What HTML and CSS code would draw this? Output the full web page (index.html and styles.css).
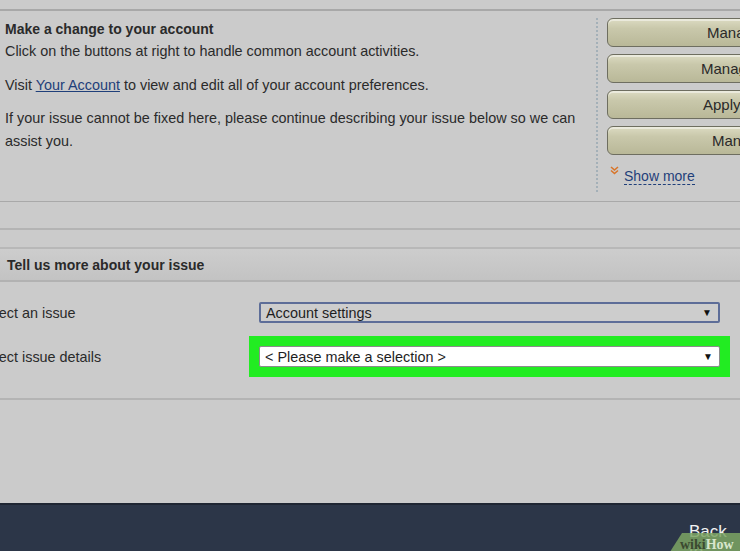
FILE: index.html
```html
<!DOCTYPE html>
<html>
<head>
<meta charset="utf-8">
<link rel="stylesheet" href="styles.css">
</head>
<body>
<div class="page">
  <div class="topline"></div>
  <section class="account">
    <div class="account-text">
      <h2 class="title">Make a change to your account</h2>
      <p class="p1">Click on the buttons at right to handle common account activities.</p>
      <p class="p2">Visit <a href="#" class="link">Your Account</a> to view and edit all of your account preferences.</p>
      <p class="p3">If your issue cannot be fixed here, please continue describing your issue below so we can assist you.</p>
    </div>
    <div class="actions">
      <div class="btn"><span>Manage</span></div>
      <div class="btn"><span>Manage</span></div>
      <div class="btn"><span>Apply</span></div>
      <div class="btn"><span>Man</span></div>
      <div class="more">
        <svg class="chev" width="9" height="9" viewBox="0 0 9 9"><path d="M1 1 L4.5 4 L8 1 M1 4.5 L4.5 7.5 L8 4.5" fill="none" stroke="#d8752a" stroke-width="1.6"/></svg>
        <a href="#" class="more-link">Show more</a>
      </div>
    </div>
  </section>
  <div class="gap1"></div>
  <div class="gap2"></div>
  <div class="panel-head">Tell us more about your issue</div>
  <div class="form">
    <div class="row row1">
      <div class="label">Select an issue</div>
      <div class="select sel-blue"><span>Account settings</span><span class="arrow">&#9660;</span></div>
    </div>
    <div class="row row2">
      <div class="label">Select issue details</div>
      <div class="highlight">
        <div class="select sel-white"><span>&lt; Please make a selection &gt;</span><span class="arrow">&#9660;</span></div>
      </div>
    </div>
  </div>
  <div class="filler"></div>
  <footer class="footer">
    <span class="back">Back to</span>
    <div class="wm"><span class="wm-wiki">wiki</span><span class="wm-how">How</span></div>
  </footer>
</div>
</body>
</html>
```

FILE: styles.css
```css
html, body {
  margin: 0;
  padding: 0;
  background: #cbcbcb;
}
body {
  font-family: "Liberation Sans", Arial, sans-serif;
  color: #2a2a2a;
  width: 740px;
  height: 551px;
  overflow: hidden;
}
.page {
  display: flex;
  flex-direction: column;
  height: 551px;
}
.topline {
  height: 9px;
  border-bottom: 2px solid #a8a8a8;
  flex: none;
}
.account {
  display: flex;
  height: 190px;
  border-bottom: 1px solid #a9a9a9;
  flex: none;
}
.account-text {
  width: 596px;
  flex: none;
  padding-left: 5px;
  padding-top: 10px;
  box-sizing: border-box;
  font-size: 14.4px;
  line-height: 17px;
}
.title {
  margin: 0;
  font-size: 14px;
  font-weight: bold;
  line-height: 17px;
}
.account-text p {
  margin: 0;
}
.p1 { margin-top: 5px !important; }
.p2 { margin-top: 17px !important; }
.p3 { margin-top: 13px !important; line-height: 23px; }
.link {
  color: #1f3f7a;
  text-decoration: underline;
}
.actions {
  border-left: 2px dotted #a4b0b8;
  margin-top: 7px;
  height: 174px;
  padding-left: 9px;
  display: flex;
  flex-direction: column;
  gap: 7px;
  flex: 1;
  overflow: hidden;
}
.btn {
  height: 29px;
  width: 160px;
  box-sizing: border-box;
  border: 1px solid #6e6e60;
  border-radius: 6px;
  background: linear-gradient(#dcdbc2 0%, #c9c8ab 35%, #b9b898 100%);
  box-shadow: inset 0 2px 0 rgba(255,255,255,0.45);
  font-size: 15px;
  color: #2a2a2a;
  display: flex;
  align-items: center;
  padding-left: 99px;
  flex: none;
}
.btn:nth-child(2) { padding-left: 93px; }
.btn:nth-child(3) { padding-left: 95px; }
.btn:nth-child(4) { padding-left: 104px; }
.more {
  display: flex;
  align-items: flex-start;
  font-size: 14px;
  margin-top: 3px;
}
.chev {
  margin: 1px 5px 0 3px;
  flex: none;
}
.more-link {
  color: #1f3f7a;
  text-decoration: none;
  border-bottom: 1px dashed #1f3f7a;
  line-height: 16px;
  margin-top: 3px;
}
.gap1 {
  height: 26px;
  border-bottom: 2px solid #b4b4b4;
  flex: none;
}
.gap2 {
  height: 17px;
  border-bottom: 2px solid #b8b8b8;
  flex: none;
}
.panel-head {
  height: 33px;
  box-sizing: border-box;
  background: linear-gradient(#cdcdcd, #c3c3c3);
  border-bottom: 2px solid #b2b2b2;
  font-size: 14px;
  font-weight: bold;
  padding-left: 7px;
  display: flex;
  align-items: center;
  flex: none;
}
.form {
  height: 118px;
  border-bottom: 2px solid #b4b4b4;
  box-sizing: border-box;
  padding-top: 20px;
  flex: none;
}
.row {
  display: flex;
  align-items: center;
}
.label {
  width: 281px;
  font-size: 14.4px;
  margin-left: -22px;
  flex: none;
  color: #2a2a2a;
}
.row2 .label {
  width: 271px;
}
.select {
  width: 461px;
  height: 21px;
  box-sizing: border-box;
  display: flex;
  align-items: center;
  justify-content: space-between;
  padding: 0 6px 0 5px;
  font-size: 14.4px;
  color: #1e1e1e;
}
.sel-blue {
  border: 2px solid #5d6d98;
  border-radius: 2px;
  background: #cdcdcd;
}
.row2 {
  margin-top: 13px;
}
.highlight {
  background: #22ec22;
  padding: 10px;
  width: 481px;
  box-sizing: border-box;
  flex: none;
}
.sel-white {
  background: #ffffff;
  border: 1px solid #8c8c8c;
  border-radius: 2px;
}
.arrow {
  font-size: 10px;
  color: #111;
}
.filler {
  flex: 1;
}
.footer {
  height: 46px;
  flex: none;
  background: #2c3648;
  border-top: 2px solid #1f2633;
  position: relative;
  overflow: hidden;
}
.back {
  position: absolute;
  left: 689px;
  top: 17px;
  color: #f2f2f2;
  font-size: 17px;
}
.wm {
  position: absolute;
  left: 668px;
  top: 28px;
  width: 90px;
  height: 22px;
  background: rgba(125, 165, 100, 0.85);
  clip-path: polygon(14px 0, 100% 0, 100% 100%, 0 100%);
  font-family: "Liberation Serif", serif;
  font-weight: bold;
  font-size: 14px;
  padding-left: 12px;
  box-sizing: border-box;
  line-height: 24px;
}
.wm-wiki { color: #3b4a30; }
.wm-how { color: #d8e6cc; }
```
